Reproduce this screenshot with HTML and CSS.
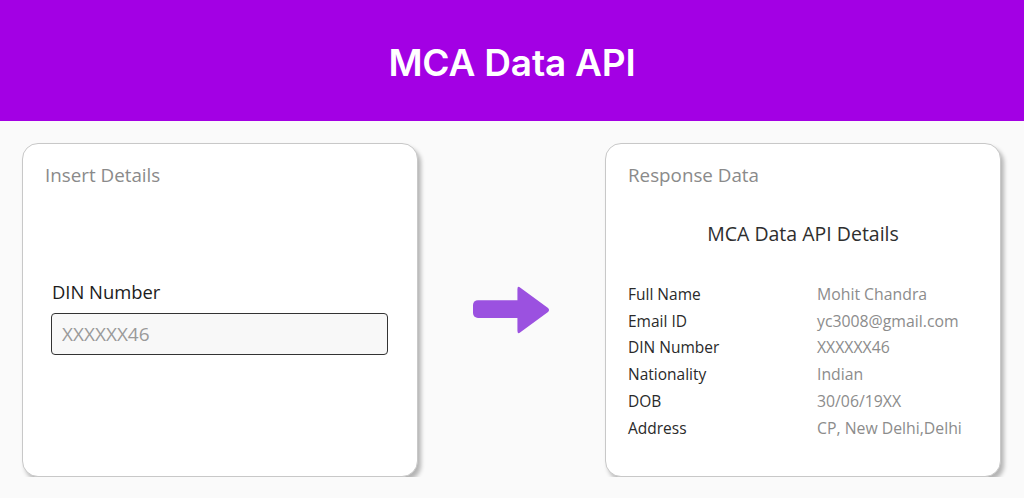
FILE: index.html
```html
<!DOCTYPE html>
<html lang="en">
<head>
    <meta charset="UTF-8">
    <meta name="viewport" content="width=device-width, initial-scale=1.0">
    <title>MCA Data API</title>
    <link rel="stylesheet" href="styles.css">
</head>
<body>

    <header class="banner">
        <h1>MCA Data API</h1>
    </header>

    <main class="content">
        <section class="card">
            <h2 class="card-title">Insert Details</h2>
            <form class="din-form">
                <label for="din">DIN Number</label>
                <input type="text" id="din" placeholder="XXXXXX46">
            </form>
        </section>

        <div class="arrow">
            <svg width="78" height="50" viewBox="0 0 78 50">
                <rect x="0" y="15" width="50" height="18" rx="5" fill="#9b51e0"/>
                <path d="M45 4 Q45 0 48 2.5 L76 23 Q78 25 76 27 L48 47.5 Q45 50 45 46 Z" fill="#9b51e0"/>
            </svg>
        </div>

        <section class="card">
            <h2 class="card-title">Response Data</h2>
            <h3 class="details-title">MCA Data API Details</h3>
            <div class="details">
                <span class="key">Full Name</span><span class="val">Mohit Chandra</span>
                <span class="key">Email ID</span><span class="val">yc3008@gmail.com</span>
                <span class="key">DIN Number</span><span class="val">XXXXXX46</span>
                <span class="key">Nationality</span><span class="val">Indian</span>
                <span class="key">DOB</span><span class="val">30/06/19XX</span>
                <span class="key">Address</span><span class="val">CP, New Delhi,Delhi</span>
            </div>
        </section>
    </main>

</body>
</html>
```

FILE: styles.css
```css
body {
    font-family: "Open Sans", "Noto Sans", sans-serif;
    background-color: #fafafa;
    color: #222;
    margin: 0;
    padding: 0;
}
.banner {
    height: 121px;
    background-color: #a300e4;
    display: flex;
    align-items: center;
    justify-content: center;
}
.banner h1 {
    margin: 0 0 -3px;
    color: white;
    font-family: Inter, sans-serif;
    font-size: 37px;
    font-weight: 600;
    letter-spacing: -0.2px;
}
.content {
    display: flex;
    align-items: center;
    gap: 55px;
    padding: 22px 22px 0;
}
.card {
    width: 396px;
    height: 334px;
    box-sizing: border-box;
    padding: 18px 22px;
    background-color: white;
    border: 1px solid #c8c8c8;
    border-radius: 16px;
    box-shadow: 3px 4px 4px rgba(0, 0, 0, 0.28);
}
.card-title {
    margin: 0;
    font-size: 18.8px;
    font-weight: 400;
    line-height: 26px;
    color: #8a8a8a;
}
.din-form {
    margin: 91px 0 0 6px;
    display: flex;
    flex-direction: column;
}
.din-form label {
    font-size: 18.4px;
    line-height: 26px;
    padding-left: 1px;
    margin-bottom: 8px;
    color: #1c1c1c;
}
.din-form input {
    width: 337px;
    height: 42px;
    box-sizing: border-box;
    padding: 0 10px;
    border: 1px solid #333;
    border-radius: 4px;
    background-color: #f8f8f8;
    font-family: inherit;
    font-size: 19px;
    color: #222;
}
.din-form input::placeholder {
    color: #9a9a9a;
}
.arrow {
    display: flex;
    width: 77px;
}
.details-title {
    margin: 32px 0 0;
    text-align: center;
    font-size: 19.5px;
    font-weight: 400;
    line-height: 28px;
    color: #2e2e2e;
}
.details {
    margin-top: 33px;
    display: grid;
    grid-template-columns: 189px 1fr;
    align-items: baseline;
    font-size: 15.5px;
    line-height: 26.7px;
}
.key {
    color: #2a2a2a;
}
.val {
    color: #8c8c8c;
    font-size: 15.8px;
}
```
